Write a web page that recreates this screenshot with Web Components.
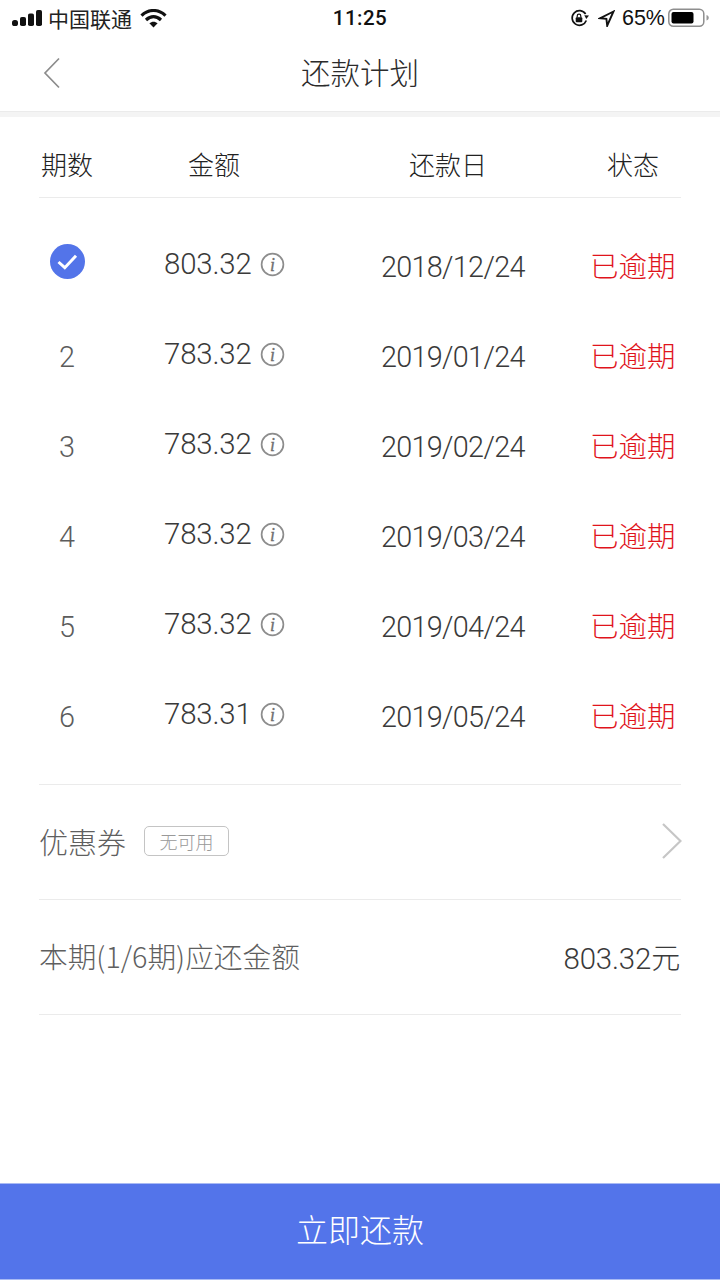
<!DOCTYPE html>
<html lang="zh"><head><meta charset="utf-8">
<style>
html,body{margin:0;padding:0;background:#fff}
body{width:720px;height:1280px;display:flex;flex-direction:column;overflow:hidden;font-family:Roboto,"Noto Sans CJK SC",sans-serif;color:#444}
</style></head><body>
<status-bar></status-bar>
<nav-bar>还款计划</nav-bar>
<plan-table>
  <plan-head></plan-head>
  <plan-row index="1" amount="803.32" date="2018/12/24" checked></plan-row>
  <plan-row index="2" amount="783.32" date="2019/01/24"></plan-row>
  <plan-row index="3" amount="783.32" date="2019/02/24"></plan-row>
  <plan-row index="4" amount="783.32" date="2019/03/24"></plan-row>
  <plan-row index="5" amount="783.32" date="2019/04/24"></plan-row>
  <plan-row index="6" amount="783.31" date="2019/05/24"></plan-row>
</plan-table>
<coupon-row></coupon-row>
<total-row></total-row>
<pay-button>立即还款</pay-button>
<script>
const CJK='"Noto Sans CJK SC",sans-serif';
function def(name,html,extra){
  customElements.define(name,class extends HTMLElement{
    constructor(){super();this.attachShadow({mode:'open'}).innerHTML=typeof html==='function'?html(this):html;}
    connectedCallback(){if(extra)extra(this);}
  });
}
def('status-bar',`<style>
:host{display:flex;align-items:center;height:36px;padding:0 10px 0 12px;position:relative;box-sizing:border-box;color:#111;font-family:"Liberation Sans",${CJK}}
.l,.r{display:flex;align-items:center}
.l{gap:5px}
.c{font-size:21px;color:#222;font-family:${CJK}}
.t{position:absolute;left:0;right:0;text-align:center;font:500 20.5px Roboto,sans-serif;letter-spacing:.5px}
.r{margin-left:auto;gap:4px;font-size:21.5px}
svg{display:block}
</style>
<div class="l">
<svg width="31" height="18" viewBox="0 0 31 18"><g fill="#111"><rect x="0" y="11" width="6" height="6" rx="2.6"/><rect x="8" y="8" width="6" height="9" rx="1.8"/><rect x="16" y="4.5" width="6" height="12.5" rx="1.8"/><rect x="24" y="1" width="6" height="16" rx="1.8"/></g></svg>
<span class="c">中国联通</span>
<svg style="margin-left:3px" width="27" height="19" viewBox="0 0 27 19"><path d="M1.5 6.6C8.7-.2 18.3-.2 25.5 6.6" fill="none" stroke="#111" stroke-width="3.2"/><path d="M6 11C10.7 6.6 16.3 6.6 21 11" fill="none" stroke="#111" stroke-width="3.2"/><path d="M9.4 14.3c2.500-2.200 5.700-2.200 8.200 0L13.500 18.500z" fill="#111"/></svg>
</div>
<span class="t">11:25</span>
<div class="r">
<svg width="20" height="18" viewBox="0 0 20 18"><path d="M16.300 11.500A7.300 7.300 0 1 1 15.600 5" fill="none" stroke="#111" stroke-width="1.700"/><path d="M14.300 6.200l4.700.4-2.700 3.500z" fill="#111"/><rect x="5.700" y="8.200" width="6.600" height="5" rx="1" fill="#111"/><path d="M7.200 8.500V7a1.800 1.800 0 0 1 3.600 0v1.500" fill="none" stroke="#111" stroke-width="1.200"/></svg>
<svg style="margin-left:4px;margin-right:3px" width="17" height="17" viewBox="0 0 17 17"><path d="M15.500 1.500L1.800 8.300l6.600.6.800 6.800z" fill="none" stroke="#111" stroke-width="1.900" stroke-linejoin="miter"/></svg>
<span>65%</span>
<svg style="margin-left:-1px" width="42" height="20" viewBox="0 0 42 20"><rect x=".8" y="1.300" width="35" height="17" rx="4.500" fill="none" stroke="#8e8e8e" stroke-width="1.500"/><rect x="3.500" y="4" width="22" height="11.500" rx="2" fill="#000"/><path d="M38.500 7v5.500c1.500-.4 2.300-1.500 2.300-2.700s-.8-2.400-2.300-2.800z" fill="#999"/></svg>
</div>`);
def('nav-bar',`<style>
:host{display:flex;align-items:center;justify-content:center;height:76px;box-sizing:border-box;border-bottom:1px solid #ebebeb;position:relative;font:300 29.5px ${CJK};color:#2b2b2b;padding-bottom:6px}
svg{position:absolute;left:43px;top:21px}
</style>
<svg width="18" height="32" viewBox="0 0 18 32"><path d="M16 1.500L2 16l14 14.500" fill="none" stroke="#8c8c8c" stroke-width="1.700"/></svg><slot></slot>`);
def('plan-table',`<style>
:host{display:block;border-top:5px solid #f4f4f4;margin:0;padding:0 39px}
.rows{padding:24px 0 22px;border-bottom:1px solid #ebebeb;display:flex;flex-direction:column}
</style><slot name="h"></slot><div class="rows"><slot></slot></div>`,el=>{el.querySelector('plan-head').slot='h';});
def('plan-head',`<style>
:host{display:grid;grid-template-columns:56px 238px 230px 22px 96px;height:81px;box-sizing:border-box;border-bottom:1px solid #ebebeb;align-items:center;justify-items:center;font:300 26px ${CJK};color:#222;width:642px;padding-top:13px}
.s{grid-column:5}
</style><span>期数</span><span>金额</span><span>还款日</span><span class="s">状态</span>`);
def('info-icon',`<style>:host{display:block;width:25px;height:25px}svg{display:block}text{font:italic 400 18px "Liberation Serif",serif;fill:#6f6f6f;stroke:#6f6f6f;stroke-width:.3px}</style>
<svg width="25" height="25" viewBox="0 0 25 25"><circle cx="12.500" cy="12.500" r="10.900" fill="none" stroke="#8d8d8d" stroke-width="1.700"/><text x="12.500" y="18.500" text-anchor="middle">i</text></svg>`);
def('plan-row',el=>`<style>
:host{display:grid;grid-template-columns:56px 69px 165px 0 52px 209px 67px;height:90px;align-items:center;font:300 28.8px Roboto,sans-serif;color:#3a3a3a;width:642px}
.i{justify-self:center;color:#5c5c5c}
.a{grid-column:3;display:flex;align-items:center;gap:8px;margin-bottom:6px;font-size:29.4px;letter-spacing:-.15px}
.d{grid-column:6;white-space:nowrap;letter-spacing:-.7px}
.s{grid-column:7;font:300 28.500px ${CJK};color:#e0141c;white-space:nowrap;margin-bottom:6px}
svg{display:block;margin-bottom:12px}
</style>
<span class="i">${el.hasAttribute('checked')?`<svg width="35" height="35" viewBox="0 0 35 35"><circle cx="17.500" cy="17.500" r="17.500" fill="#5374e9"/><path d="M8.500 18l6.300 5.700L26 11.800" fill="none" stroke="#fff" stroke-width="3"/></svg>`:el.getAttribute('index')}</span>
<div class="a"><span>${el.getAttribute('amount')}</span><info-icon></info-icon></div>
<span class="d">${el.getAttribute('date')}</span>
<span class="s">已逾期</span>`);
def('coupon-row',`<style>
:host{display:flex;align-items:center;height:115px;box-sizing:border-box;margin:0 39px;border-bottom:1px solid #ebebeb;font:300 29px ${CJK};color:#5f5f5f;padding-bottom:2px}
.b{margin-left:18px;width:85px;height:30px;box-sizing:border-box;border:1px solid #c4c4c4;border-radius:5px;font-size:18px;color:#999;display:flex;align-items:center;justify-content:center}
svg{margin-left:auto;margin-right:-1px}
</style><span>优惠券</span><span class="b">无可用</span>
<svg width="20" height="36" viewBox="0 0 20 36"><path d="M1 1l17.500 17L1 35" fill="none" stroke="#c6c6c6" stroke-width="2.200"/></svg>`);
def('total-row',`<style>
:host{display:flex;align-items:center;justify-content:space-between;height:115px;box-sizing:border-box;margin:0 39px;border-bottom:1px solid #ebebeb;font:300 28.7px ${CJK};color:#5f5f5f;padding:0 1px 3px 0}
.v{color:#3a3a3a;font:300 29.4px Roboto,${CJK};letter-spacing:-.15px}
.v i{font:300 29px ${CJK}}
</style><span>本期(1/6期)应还金额</span><span class="v">803.32<i>元</i></span>`);
def('pay-button',`<style>
:host{display:flex;align-items:center;justify-content:center;height:97px;margin-top:auto;box-sizing:border-box;background:#5374ea;color:#fff;font:300 32px ${CJK};border-top:1px solid #a9baf4;border-bottom:1px solid #a9baf4;padding-bottom:8px}
</style><slot></slot>`);
</script>
</body></html>
